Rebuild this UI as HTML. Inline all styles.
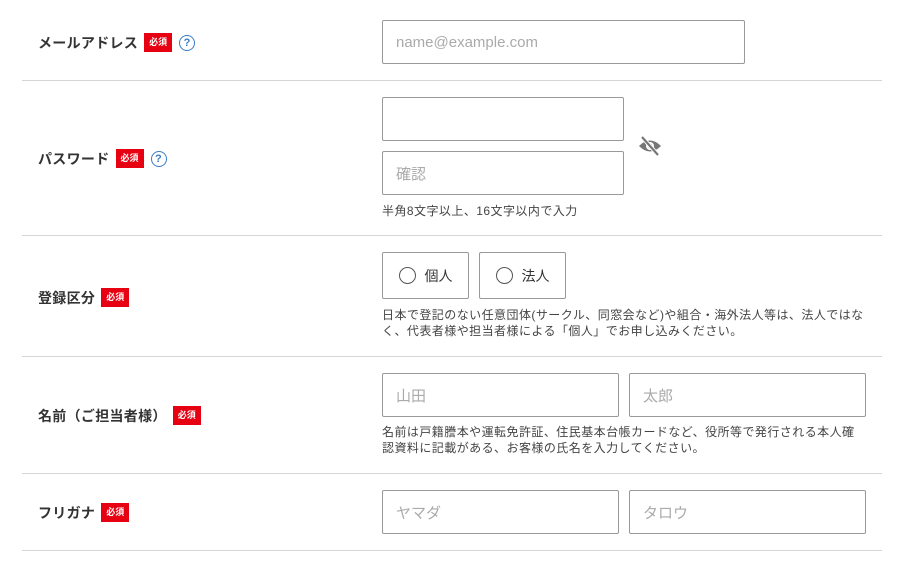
<!DOCTYPE html>
<html><head><meta charset="utf-8"><style>
body{margin:0;width:920px;height:561px;background:#fff;position:relative;font-family:"Liberation Sans","Noto Sans CJK JP",sans-serif;color:#333;overflow:hidden}
.a{position:absolute}
.hr{position:absolute;left:22px;width:860px;height:1px;background:#d6d6d6}
.lb{position:absolute;left:38px;font-size:14px;font-weight:bold;color:#333;line-height:18px;display:flex;align-items:center;letter-spacing:0.3px}
.req{display:inline-block;background:#e60012;color:#fff;font-size:9px;font-weight:bold;padding:0 5px;height:19px;line-height:19px;margin-left:6px;letter-spacing:0}
.q{display:inline-block;width:14px;height:14px;border:1.5px solid #3a7cc4;border-radius:50%;color:#3a7cc4;font-size:11px;line-height:14px;text-align:center;font-weight:bold;margin-left:7px}
.in{position:absolute;border:1px solid #999;border-radius:2px;box-sizing:border-box;font-size:15px;color:#aaa;padding-left:13px;display:flex;align-items:center}
.nt{position:absolute;left:382px;font-size:12px;color:#444;line-height:16px;letter-spacing:0.45px}
.rb{position:absolute;border:1px solid #999;border-radius:2px;box-sizing:border-box;top:252px;height:47px;width:87px;display:flex;align-items:center;justify-content:center;font-size:14px;color:#333}
.rb i{display:inline-block;width:15px;height:15px;border:1px solid #555;border-radius:50%;margin-right:9px}
</style></head><body>
<div class="lb" style="top:33px">メールアドレス<span class="req">必須</span><span class="q">?</span></div>
<div class="in" style="left:382px;top:20px;width:363px;height:44px">name@example.com</div>
<div class="hr" style="top:80px"></div>
<div class="lb" style="top:149px">パスワード<span class="req">必須</span><span class="q">?</span></div>
<div class="in" style="left:382px;top:97px;width:242px;height:44px"></div>
<div class="in" style="left:382px;top:151px;width:242px;height:44px">確認</div>
<svg class="a" style="left:638px;top:135px" width="24" height="22" viewBox="0 0 24 22"><path d="M1 11 Q12 0 23 11 Q12 22 1 11Z" fill="#777"/><circle cx="12" cy="11" r="4" fill="#fff"/><circle cx="12" cy="11" r="2.2" fill="#777"/><path d="M4 2 L20 20" stroke="#fff" stroke-width="4"/><path d="M4 2 L20 20" stroke="#777" stroke-width="2.2"/></svg>
<div class="nt" style="top:203px">半角8文字以上、16文字以内で入力</div>
<div class="hr" style="top:235px"></div>
<div class="lb" style="top:288px">登録区分<span class="req">必須</span></div>
<div class="rb" style="left:382px"><i></i>個人</div>
<div class="rb" style="left:479px"><i></i>法人</div>
<div class="nt" style="top:307px">日本で登記のない任意団体(サークル、同窓会など)や組合・海外法人等は、法人ではな<br>く、代表者様や担当者様による「個人」でお申し込みください。</div>
<div class="hr" style="top:356px"></div>
<div class="lb" style="top:406px">名前（ご担当者様）<span class="req">必須</span></div>
<div class="in" style="left:382px;top:373px;width:237px;height:44px">山田</div>
<div class="in" style="left:629px;top:373px;width:237px;height:44px">太郎</div>
<div class="nt" style="top:424px">名前は戸籍謄本や運転免許証、住民基本台帳カードなど、役所等で発行される本人確<br>認資料に記載がある、お客様の氏名を入力してください。</div>
<div class="hr" style="top:473px"></div>
<div class="lb" style="top:503px">フリガナ<span class="req">必須</span></div>
<div class="in" style="left:382px;top:490px;width:237px;height:44px">ヤマダ</div>
<div class="in" style="left:629px;top:490px;width:237px;height:44px">タロウ</div>
<div class="hr" style="top:550px"></div>
</body></html>
